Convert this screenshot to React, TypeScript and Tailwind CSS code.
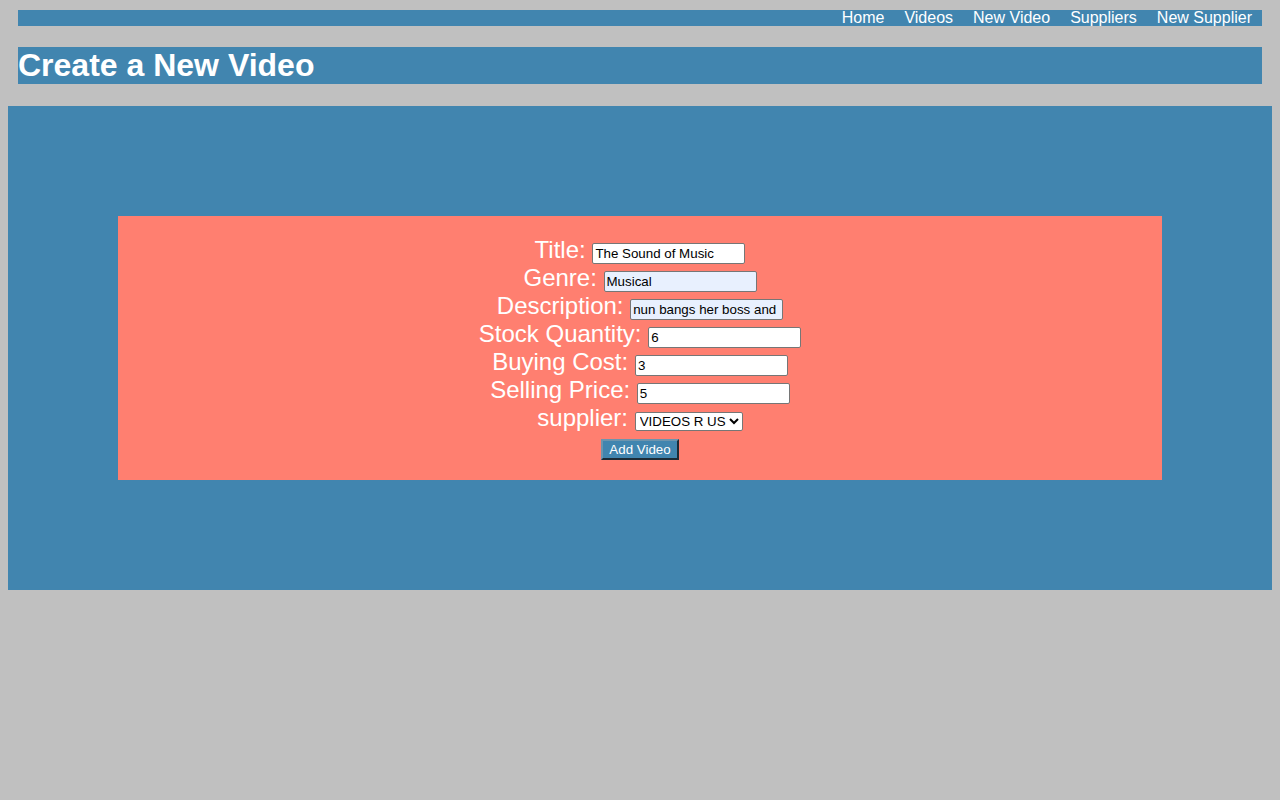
export default function App() {
  const inputCls =
    "inline-block align-baseline w-[153px] h-[21px] border border-[#767676] rounded-[2px] px-[2px] text-[13.33px] leading-[15px] text-black";
  const rows: { label: string; value: string; bg?: string }[] = [
    { label: "Title:", value: "The Sound of Music" },
    { label: "Genre:", value: "Musical", bg: "bg-[#e8f0fe]" },
    { label: "Description:", value: "nun bangs her boss and", bg: "bg-[#e8f0fe]" },
    { label: "Stock Quantity:", value: "6" },
    { label: "Buying Cost:", value: "3" },
    { label: "Selling Price:", value: "5" },
  ];
  return (
    <div className="min-h-[800px] bg-[#c0c0c0] pt-[10px] text-white [font-family:'Liberation_Sans',Arial,sans-serif]">
      <nav className="mx-[18px] h-[16px] bg-[#4185af] flex justify-end gap-[20px] pr-[10px] text-[16px] leading-[16px]">
        <a>Home</a>
        <a>Videos</a>
        <a>New Video</a>
        <a>Suppliers</a>
        <a>New Supplier</a>
      </nav>
      <h1 className="mx-[18px] mt-[21px] h-[37px] bg-[#4185af] text-[32px] font-bold leading-[37px]">
        Create a New Video
      </h1>
      <main className="mx-[8px] mt-[22px] h-[484px] bg-[#4185af] p-[110px]">
        <div className="h-[264px] bg-[#ff7f70] pt-[20px] text-center">
          {rows.map((r) => (
            <div key={r.label} className="h-[28px] text-[24px] leading-[28px] whitespace-nowrap">
              {r.label}{" "}
              <input
                readOnly
                defaultValue={r.value}
                className={`${inputCls} ${r.bg ?? "bg-white"}`}
              />
            </div>
          ))}
          <div className="h-[28px] text-[24px] leading-[28px] whitespace-nowrap">
            supplier:{" "}
            <select
              defaultValue="v"
              className="inline-block align-baseline w-[108px] h-[19px] border border-[#767676] rounded-[2px] bg-white text-[13.33px] text-black"
            >
              <option value="v">VIDEOS R US</option>
            </select>
          </div>
          <div className="pt-[7px] flex justify-center">
            <button className="w-[78px] h-[21px] bg-[#4185af] text-white text-[13.33px] leading-[15px] border-2 border-t-[#6d94ad] border-l-[#6d94ad] border-r-[#1c2b36] border-b-[#1c2b36]">
              Add Video
            </button>
          </div>
        </div>
      </main>
    </div>
  );
}
